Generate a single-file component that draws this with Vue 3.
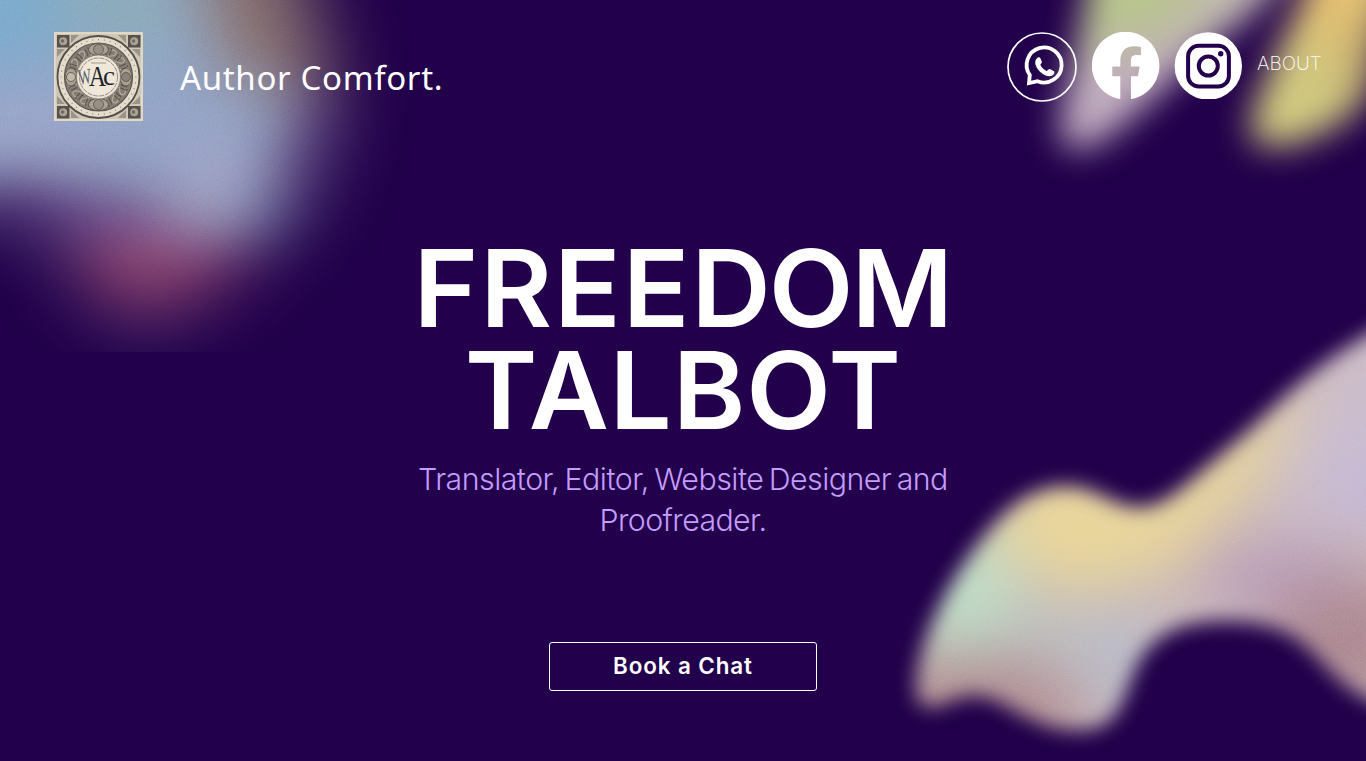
<script setup>
const ticks = Array.from({ length: 40 }, (_, i) => i * 9)
const scrolls = Array.from({ length: 16 }, (_, i) => i * 22.5 + 11)
const corners = [[3, 3], [74, 3], [3, 74], [74, 74]]
</script>

<template>
  <main class="page">
    <svg class="backdrop" viewBox="0 0 1366 761" aria-hidden="true">
      <defs>
        <filter id="b9" x="-20%" y="-20%" width="140%" height="140%" color-interpolation-filters="sRGB"><feGaussianBlur stdDeviation="10" /></filter>
        <filter id="b13" x="-50%" y="-50%" width="200%" height="200%" color-interpolation-filters="sRGB"><feGaussianBlur stdDeviation="17" /></filter>
        <filter id="b28" x="-50%" y="-50%" width="200%" height="200%" color-interpolation-filters="sRGB"><feGaussianBlur stdDeviation="37" /></filter>
        <filter id="soft" filterUnits="userSpaceOnUse" x="-200" y="-200" width="1800" height="1200" color-interpolation-filters="sRGB"><feGaussianBlur stdDeviation="30" /></filter>
        <filter id="grain" x="0" y="0" width="100%" height="100%">
          <feTurbulence type="fractalNoise" baseFrequency="0.8" numOctaves="2" />
          <feColorMatrix values="0.33 0.33 0.33 0 0  0.33 0.33 0.33 0 0  0.33 0.33 0.33 0 0  0 0 0 0 1" />
        </filter>
        <mask id="mWave" maskUnits="userSpaceOnUse" x="850" y="250" width="516" height="511">
          <path filter="url(#b9)" fill="#fff" d="M1430 292L1366 336C1345 348 1325 362 1307 377C1280 399 1262 419 1240 438L1190 481C1172 496 1158 507 1140 507C1112 507 1098 486 1067 486C1030 486 1005 509 983 537C950 578 918 640 916 685C915 704 924 709 934 707C950 703 960 695 977 696C1000 698 1010 711 1040 723C1062 731 1092 735 1109 721C1129 703 1127 675 1147 650C1165 629 1190 621 1223 621C1255 620 1285 627 1307 647C1333 673 1340 684 1366 698L1430 722Z" />
        </mask>
        <mask id="mLeft" maskUnits="userSpaceOnUse" x="0" y="0" width="440" height="352">
          <path filter="url(#b28)" fill="#fff" d="M-100 -100H275C303 -20 332 45 330 105C324 160 294 210 258 240C215 288 165 326 118 306C78 288 84 246 42 216C8 196 -40 203 -100 208Z" />
        </mask>
        <mask id="mA" maskUnits="userSpaceOnUse" x="1000" y="0" width="366" height="200">
          <path filter="url(#b13)" fill="#fff" d="M1092 -60C1088 0 1080 25 1072 70C1065 100 1051 138 1069 148C1090 156 1122 126 1150 101C1184 72 1207 44 1248 18L1318 -60Z" />
        </mask>
        <mask id="mB" maskUnits="userSpaceOnUse" x="1180" y="0" width="186" height="220">
          <path filter="url(#b13)" fill="#fff" d="M1318 -60C1308 0 1290 20 1274 60C1260 95 1238 135 1260 145C1286 152 1325 135 1346 119C1366 105 1374 91 1378 62C1382 30 1400 0 1400 -60Z" />
        </mask>
      </defs>

      <g mask="url(#mLeft)">
        <rect width="440" height="352" fill="#899cc2" />
        <g filter="url(#soft)">
          <ellipse cx="-10" cy="-10" rx="105" ry="85" fill="#72a2c8" />
          <ellipse cx="120" cy="0" rx="65" ry="65" fill="#7fa2b4" />
          <path d="M180 -80H440V125L225 80Z" fill="#7d6967" />
          <ellipse cx="330" cy="160" rx="60" ry="60" fill="#6e5f8c" />
          <ellipse cx="20" cy="130" rx="85" ry="28" fill="#949dc6" />
          <ellipse cx="215" cy="185" rx="42" ry="40" fill="#9b9bc0" />
          <ellipse cx="65" cy="222" rx="115" ry="38" fill="#62487f" />
          <ellipse cx="165" cy="298" rx="135" ry="62" fill="#8c4669" />
        </g>
        <rect class="noise" width="440" height="352" filter="url(#grain)" />
      </g>

      <g mask="url(#mA)">
        <rect x="1000" width="366" height="200" fill="#c3aec2" />
        <g filter="url(#soft)">
          <path d="M1030 -90H1220L1190 32L1050 58Z" fill="#b8c68a" />
          <ellipse cx="1245" cy="10" rx="38" ry="38" fill="#c5bfb0" />
        </g>
      </g>
      <g mask="url(#mB)">
        <rect x="1180" width="186" height="220" fill="#d1c980" />
        <g filter="url(#soft)">
          <ellipse cx="1335" cy="-15" rx="65" ry="60" fill="#e9c472" />
          <ellipse cx="1385" cy="65" rx="25" ry="60" fill="#a88a63" />
        </g>
      </g>

      <g mask="url(#mWave)">
        <rect x="850" y="250" width="516" height="511" fill="#c6b2b4" />
        <g filter="url(#soft)">
          <path d="M970 540L1050 450L1140 490L1310 370L1280 450L1190 560L1080 595Z" fill="#e7d28f" />
          <path d="M1285 420L1420 280V510L1280 530Z" fill="#c6b6c8" />
          <ellipse cx="1375" cy="490" rx="45" ry="45" fill="#beb1d4" />
          <ellipse cx="960" cy="592" rx="58" ry="66" fill="#b8d8c0" />
          <ellipse cx="1055" cy="635" rx="48" ry="32" fill="#b5babb" />
          <ellipse cx="1125" cy="665" rx="36" ry="60" fill="#b1b4c5" />
          <ellipse cx="1275" cy="575" rx="85" ry="34" fill="#b294b3" />
          <ellipse cx="1350" cy="642" rx="86" ry="64" fill="#a67e88" />
          <path d="M890 662L1010 652L1080 690L1070 770H880Z" fill="#a98287" />
        </g>
        <rect class="noise" x="850" y="250" width="516" height="511" filter="url(#grain)" />
      </g>
    </svg>

    <header class="header">
      <svg class="emblem" viewBox="0 0 89 89" role="img" aria-label="Author Comfort emblem">
        <rect width="89" height="89" fill="#cfc7b7" />
        <rect x="1" y="1" width="87" height="87" fill="none" stroke="#e8decb" stroke-width="1.5" />
        <g v-for="(c, i) in corners" :key="i" :transform="`translate(${c[0]} ${c[1]})`">
          <rect width="12.5" height="12.5" fill="#57514d" />
          <circle cx="6.2" cy="6.2" r="4" fill="#aaa294" />
          <circle cx="5.5" cy="6" r="1.7" fill="#716961" />
        </g>
        <path d="M17 3h8l-8 8zM72 3h-8l8 8zM17 86h8l-8-8zM72 86h-8l8-8zM3 17v8l8-8zM86 17v8l-8-8zM3 72v-8l8 8zM86 72v-8l-8 8z" fill="#9c9487" />
        <circle cx="44.5" cy="45" r="41" fill="#e5dccb" stroke="#55504b" stroke-width="1.8" />
        <circle cx="44.5" cy="45" r="34" fill="#857d73" stroke="#5e5851" stroke-width="1.2" />
        <path v-for="a in ticks" :key="a" d="M44.5 7v1.2" stroke="#8b8378" stroke-width="1" :transform="`rotate(${a} 44.5 45)`" />
        <g v-for="a in scrolls" :key="'s' + a" :transform="`rotate(${a} 44.5 45)`" fill="none">
          <path d="M40 17c2-5 8-3 6 1s-6 2-4 5 5 1 5-1" stroke="#b5ab9c" stroke-width="1.2" />
          <path d="M39 14c3 1 1 5 3 7M49 15c-2 2 1 4-2 7" stroke="#544e49" stroke-width="1" />
        </g>
        <g stroke="#554f48" stroke-width=".8" fill="#aaa194">
          <ellipse cx="44.5" cy="17.5" rx="10" ry="6" /><ellipse cx="44.5" cy="72.5" rx="10" ry="6" />
          <ellipse cx="17" cy="45" rx="6" ry="9" /><ellipse cx="72" cy="45" rx="6" ry="9" />
          <circle cx="44.5" cy="17.5" r="5" fill="#989083" /><circle cx="44.5" cy="72.5" r="5" fill="#989083" />
          <circle cx="17" cy="45" r="4.5" fill="#c2b9a9" /><circle cx="72" cy="45" r="4.5" fill="#8b8377" />
        </g>
        <circle cx="44.5" cy="45" r="22" fill="#ebe2d1" stroke="#777067" stroke-width=".7" />
        <circle cx="44.5" cy="45" r="19" fill="#efe7d7" stroke="#777" stroke-width=".8" stroke-dasharray="5 1" />
        <path d="M37 31h15" stroke="#777" stroke-width=".7" />
        <g class="monogram">
          <text x="25" y="52" font-size="22" fill="#566171" transform="rotate(-8 30 50)" textLength="13" lengthAdjust="spacingAndGlyphs">W</text>
          <text x="35" y="53.5" font-size="29" fill="#20242b" textLength="17" lengthAdjust="spacingAndGlyphs">A</text>
          <text x="49" y="53.2" font-size="27" fill="#20242b" textLength="12" lengthAdjust="spacingAndGlyphs">c</text>
        </g>
      </svg>
      <span class="brand">Author Comfort.</span>
      <nav class="nav">
        <svg class="icon wa" viewBox="0 0 70 70" role="img" aria-label="WhatsApp">
          <circle cx="35" cy="35" r="34" fill="none" stroke="#fff" stroke-width="1.7" />
          <g transform="translate(2 .8)">
            <path d="M20.8 42.2A17.5 17.5 0 1 1 28.6 48.4L20 50.3Z" fill="none" stroke="#fff" stroke-width="3.8" />
            <path d="M28.2 25.1c1.4-1.1 2.8-.7 3.3.5l1.4 3.4c.5 1.2-1.7 2.5-1.5 3.3 1.2 2.6 3.5 4.6 6 5.8 1 .4 2.2-2.3 3.4-1.8l3.7 1.8c1.7.8.7 3.2-.6 4.2-2.5 2-6.2 1.1-9.2-.6-3.3-1.9-6.8-5.8-8-9.3-.9-2.8-.6-5.8 1.5-7.3Z" fill="#fff" />
          </g>
        </svg>
        <svg class="icon fb" viewBox="0 0 68 67" role="img" aria-label="Facebook">
          <path fill="#fff" d="M28.3 67V44.3H20.3V34.6h8v-4.8c0-10 4.8-15.6 13.6-15.6 2.6 0 5.2.3 7.1.8v8h-4.4c-4.3 0-5.7 2.2-5.7 5.9v5.7h8.8l-1.8 9.7h-7V67A33.8 33.8 0 1 0 28.3 67Z" />
        </svg>
        <svg class="icon ig" viewBox="0 0 68 67" role="img" aria-label="Instagram">
          <circle cx="34.3" cy="34" r="33.7" fill="#fff" />
          <rect x="14.1" y="13.8" width="40.8" height="40.6" rx="10.5" fill="none" stroke="#22004b" stroke-width="4" />
          <circle cx="34.3" cy="34" r="9.5" fill="none" stroke="#22004b" stroke-width="4" />
          <circle cx="46.7" cy="21.8" r="2.7" fill="#22004b" />
        </svg>
        <a class="about">ABOUT</a>
      </nav>
    </header>

    <section class="hero">
      <h1 class="title"><span class="line l1"><span class="wide">FREE</span><span class="tight">DO</span>M</span><span class="line l2">TALBOT</span></h1>
      <p class="role"><span class="line r1">Translator, Editor, Website Designer and</span><span class="line r2">Proofreader.</span></p>
      <button class="cta" type="button">Book a Chat</button>
    </section>
  </main>
</template>

<style scoped>
.page {
  position: relative;
  width: 1366px;
  height: 761px;
  overflow: hidden;
  background: #22004b;
  color: #fff;
  font-family: Inter, "Liberation Sans", sans-serif;
}
.backdrop { position: absolute; inset: 0; width: 1366px; height: 761px; }
.noise { opacity: 0.22; mix-blend-mode: overlay; }
.header {
  position: relative;
  display: flex;
  align-items: flex-start;
  height: 124px;
  box-sizing: border-box;
  padding: 32px 44px 0 53.5px;
}
.emblem { width: 89px; height: 89px; flex: none; }
.monogram { font-family: "Liberation Serif", serif; }
.brand {
  margin: 24px 0 0 37.5px;
  font: 400 33px/44px "Noto Sans", "Open Sans", sans-serif;
  letter-spacing: 0.66px;
  white-space: nowrap;
}
.nav { display: flex; align-items: flex-start; margin-left: auto; }
.icon { flex: none; display: block; }
.wa { width: 70px; height: 70px; }
.fb { width: 68px; height: 67px; margin-left: 15px; }
.ig { width: 68px; height: 67px; margin-left: 14px; }
.about {
  width: 65px;
  margin-left: 15px;
  margin-top: 20px;
  font-size: 19px;
  line-height: 24px;
  font-weight: 200;
  white-space: nowrap;
}
.hero { position: relative; display: flex; flex-direction: column; align-items: center; padding-top: 113px; }
.title { margin: 0; font-size: 107.5px; line-height: 102px; font-weight: 600; text-align: center; transform: scaleX(1.025); }
.line { display: block; white-space: nowrap; }
.wide { letter-spacing: 1.9px; }
.tight { letter-spacing: -2px; }
.l2 { letter-spacing: 0.8px; }
.role { margin: 17.5px 0 0; color: #c59cff; font-size: 30.3px; line-height: 41px; font-weight: 300; text-align: center; }
.r1 { letter-spacing: -0.5px; word-spacing: -2.6px; }
.r2 { letter-spacing: -0.6px; }
.cta {
  width: 268px;
  height: 49px;
  margin-top: 101.5px;
  padding: 0 0 2px;
  border: 1.5px solid #fff;
  border-radius: 3px;
  background: transparent;
  color: #fff;
  font: 600 22.4px/44px Inter, "Liberation Sans", sans-serif;
  letter-spacing: 0.9px;
}
</style>

<style>
body { background: #22004b; }
</style>
